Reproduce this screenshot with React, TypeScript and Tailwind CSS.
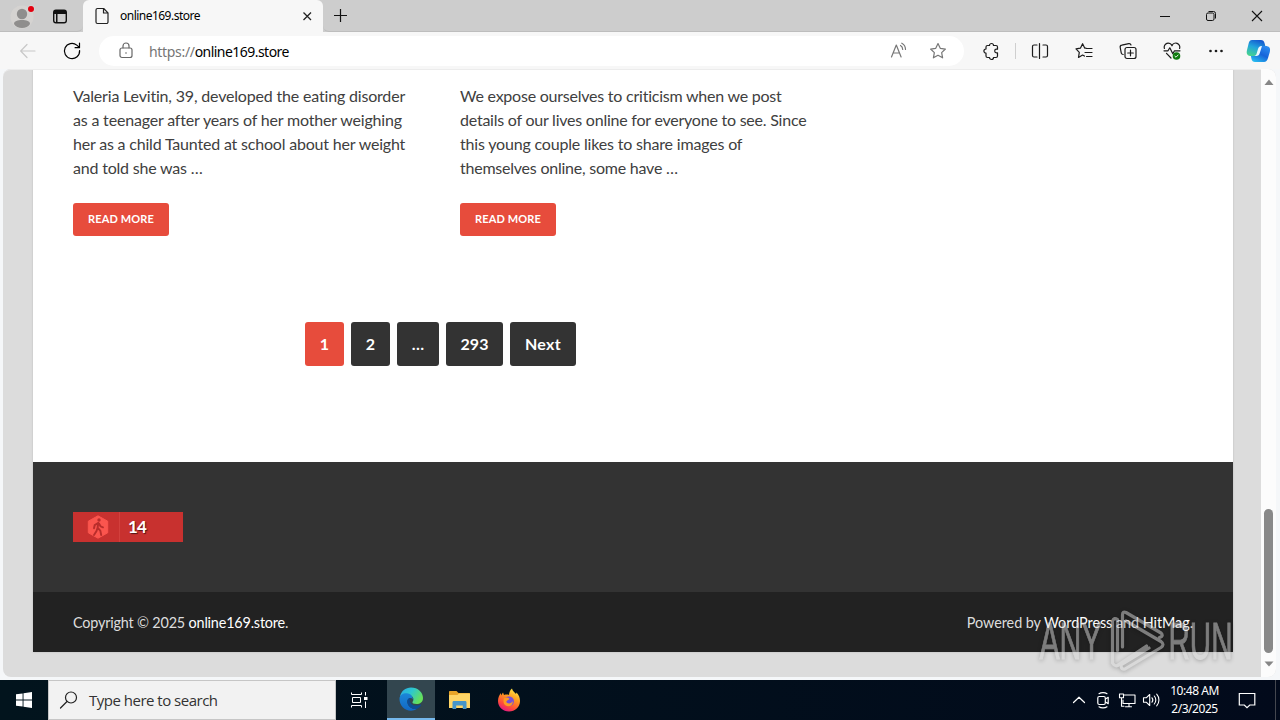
import React from 'react';

interface IconProps {
  size?: number;
  className?: string;
  children: React.ReactNode;
}

// Shared wrapper for the 20x20 line icons in the browser chrome and the tray
const Icon: React.FC<IconProps> = ({ size = 20, className = '', children }) => (
  <svg
    width={size}
    height={size}
    viewBox="0 0 20 20"
    fill="none"
    stroke="currentColor"
    strokeWidth="1.2"
    strokeLinecap="round"
    strokeLinejoin="round"
    className={`block shrink-0 ${className}`}
  >
    {children}
  </svg>
);

const STAR = 'M10 2.6l2.25 4.75 5.15.7-3.75 3.6.95 5.2L10 14.3l-4.6 2.55.95-5.2-3.75-3.6 5.15-.7z';

const TabStrip: React.FC = () => (
  <div className="flex h-8 shrink-0 bg-[#cdcdcd]">
    <div className="flex w-[83px] items-center rounded-br-md border-b border-[#bdbdbd]">
      <svg width="44" height="30" viewBox="0 0 44 30" className="block shrink-0">
        <circle cx="22" cy="16" r="11.5" fill="#d5d3d1" />
        <circle cx="22" cy="13" r="5.2" fill="#8f8e8d" />
        <path d="M14 23c0-3 3.500-4 8-4s8 1 8 4c-1.500 2.500-4.500 4-8 4s-6.500-1.500-8-4z" fill="#8f8e8d" />
        <circle cx="31" cy="8" r="4" fill="#d5d3d1" />
        <circle cx="31" cy="8" r="3" fill="#e3000f" />
      </svg>
      <svg width="32" height="30" viewBox="0 0 32 30" className="block shrink-0">
        <rect x="9.700" y="9.200" width="12.600" height="12.600" rx="2.200" fill="none" stroke="#111" strokeWidth="1.400" />
        <path d="M10 9.500h12V13h-8.500v8.500H12V13h-2z" fill="#111" />
      </svg>
    </div>
    <div className="flex w-[240px] items-center rounded-t-md bg-[#f7f7f7]">
      <svg width="37" height="32" viewBox="0 0 37 32" className="block shrink-0">
        <path
          d="M14.500 8.500h6.200l4.300 4.300v9.200a1.500 1.500 0 0 1-1.500 1.500h-9a1.500 1.500 0 0 1-1.500-1.500V10a1.500 1.500 0 0 1 1.500-1.500zM20.500 8.700V13h4.300"
          fill="none"
          stroke="#222"
          strokeWidth="1.200"
          strokeLinejoin="round"
        />
      </svg>
      <span className="grow font-['Noto_Sans'] text-[12px] tracking-[-0.52px] text-black">online169.store</span>
      <svg width="32" height="32" viewBox="0 0 32 32" className="block shrink-0">
        <path d="M12.500 12.500l7.500 7.500M20 12.500L12.500 20" stroke="#222" strokeWidth="1.300" />
      </svg>
    </div>
    <div className="flex grow items-center justify-between rounded-bl-md border-b border-[#bdbdbd]">
      <svg width="34" height="31" viewBox="0 0 34 31" className="block">
        <path d="M17.500 9v13M11 15.500h13" stroke="#111" strokeWidth="1.200" />
      </svg>
      <div className="flex text-[#111]">
        <svg width="46" height="31" viewBox="0 0 46 31" className="block">
          <path d="M18 16.500h10" stroke="currentColor" />
        </svg>
        <svg width="46" height="31" viewBox="0 0 46 31" className="block" fill="none" stroke="currentColor">
          <rect x="18.500" y="13" width="7.500" height="7.500" rx="1.500" />
          <path d="M20.500 11.500h5a2 2 0 0 1 2 2v5" />
        </svg>
        <svg width="46" height="31" viewBox="0 0 46 31" className="block">
          <path d="M18 11l10 10M28 11L18 21" stroke="currentColor" strokeWidth="1.100" />
        </svg>
      </div>
    </div>
  </div>
);

const ToolButton: React.FC<{ children: React.ReactNode; className?: string }> = ({ children, className = '' }) => (
  <div className={`flex w-11 shrink-0 items-center justify-center ${className}`}>{children}</div>
);

const Toolbar: React.FC = () => (
  <div className="flex h-[37px] shrink-0 items-center bg-[#f7f7f7] pl-1.5 pt-px text-[#1b1b1b]">
    <ToolButton className="text-[#c8c8c8]">
      <Icon>
        <path d="M17 10H3M9 3.500L2.700 10 9 16.500" />
      </Icon>
    </ToolButton>
    <ToolButton>
      <Icon className="text-black">
        <path d="M17.600 9.500A7.600 7.600 0 1 1 14.800 4.100L17.300 6.400M17.500 2.200v4.500h-4.400" />
      </Icon>
    </ToolButton>
    <div className="ml-[5px] flex h-[30px] w-[865px] shrink-0 items-center rounded-full bg-white">
      <div className="flex w-[50px] items-center justify-center pl-1 text-[#686868]">
        <Icon>
          <rect x="4" y="7" width="12" height="9.500" rx="2" />
          <path d="M7 6.800V5a3 3 0 0 1 6 0v1.800" />
          <circle cx="10" cy="12" r=".8" fill="currentColor" stroke="none" />
        </Icon>
      </div>
      <span className="grow font-['Noto_Sans'] text-[14px] tracking-[-0.54px] text-black">
        <span className="tracking-[-0.32px] text-[#767676]">https://</span>online169.store
      </span>
      <div className="flex w-10 justify-center pl-0.5 text-[#777]">
        <Icon>
          <path d="M2.500 16L7.300 4l4.800 12M4.200 12h6.200M11.500 4.500c1.400.8 2.200 2.200 2.200 4M12.800 2.200c2.300 1.200 3.700 3.300 3.700 6.300" />
        </Icon>
      </div>
      <div className="mr-1.5 flex w-10 justify-center text-[#777]">
        <Icon>
          <path d={STAR} />
        </Icon>
      </div>
    </div>
    <ToolButton className="ml-[5px]">
      <Icon>
        <path d="M6.500 4.500h2a2 2 0 0 1 4 0H15a1.500 1.500 0 0 1 1.500 1.500v2.200h-1a1.800 1.800 0 0 0 0 3.600h1V15a1.500 1.500 0 0 1-1.500 1.500h-2.500a2 2 0 0 1-4 0h-2A1.500 1.500 0 0 1 5 15v-2.800a2.100 2.100 0 0 1 0-4.200V6a1.500 1.500 0 0 1 1.500-1.500z" />
      </Icon>
    </ToolButton>
    <div className="mx-0.5 h-4 w-px bg-[#cfcfcf]" />
    <ToolButton>
      <Icon>
        <path d="M7 4H4a1.500 1.500 0 0 0-1.500 1.500v9A1.500 1.500 0 0 0 4 16h3M13 4h3a1.500 1.500 0 0 1 1.500 1.500v9A1.500 1.500 0 0 1 16 16h-3M9.500 2.500v15" />
      </Icon>
    </ToolButton>
    <ToolButton>
      <Icon>
        <path d="M12 7.200h-1.200L8.600 2.700 6.400 7.200l-4.400.7 3.300 3.500-.8 5 4.100-2.300 1.800 1M12.500 7.500h5.500M11 11.500h7M12.500 15.500h5.500" />
      </Icon>
    </ToolButton>
    <ToolButton>
      <Icon>
        <rect x="7" y="6.500" width="11" height="11" rx="2" />
        <path d="M12.500 9.200v5.600M9.700 12h5.600M5.200 13.500a2 2 0 0 1-1.900-1.400L2.200 6.500a2 2 0 0 1 1.600-2.300l7-1.600A2 2 0 0 1 13 4" />
      </Icon>
    </ToolButton>
    <ToolButton>
      <Icon>
        <path d="M2.400 7.500a4 4 0 0 1 7.600-2.700 4 4 0 0 1 7.600 2.700M2 9.800h4l1.800-3 3 6 1.700-3H18M4.500 12.300L9 17" />
        <circle cx="14.500" cy="15" r="3.800" fill="#107c10" stroke="none" />
        <path d="M12.900 15.200l1.100 1 2.100-2.200" stroke="#fff" strokeWidth=".9" />
      </Icon>
    </ToolButton>
    <ToolButton>
      <Icon>
        <g fill="currentColor" stroke="none">
          <circle cx="4.500" cy="10" r="1.350" />
          <circle cx="10" cy="10" r="1.350" />
          <circle cx="15.500" cy="10" r="1.350" />
        </g>
      </Icon>
    </ToolButton>
    <svg width="40" height="28" viewBox="0 0 40 28" className="block shrink-0">
      <defs>
        <linearGradient id="copilotLeft" x1=".6" y1="0" x2=".2" y2="1">
          <stop offset="0" stopColor="#155bd0" />
          <stop offset=".45" stopColor="#22a5dc" />
          <stop offset="1" stopColor="#48d58c" />
        </linearGradient>
        <linearGradient id="copilotRight" x1=".8" y1="0" x2=".2" y2="1">
          <stop offset="0" stopColor="#2b8df2" />
          <stop offset=".5" stopColor="#1664d9" />
          <stop offset="1" stopColor="#29bdf0" />
        </linearGradient>
      </defs>
      <path d="M14 3h9c2 0 3 1 3.500 3l.8 3h-3c-2 0-3 1-3.500 3l-1.300 5c-.5 1.500-1.500 2-3 2h-3c-4 0-5.500-2-4.500-6l1.500-6c.6-2.500 1.500-4 3.500-4z" fill="url(#copilotLeft)" />
      <path d="M26 25h-9c-2 0-3-1-3.500-3l-.6-3h3.600c1.500 0 2.500-.7 3-2l1.300-5c.5-2 1.500-3 3.500-3h3c4 0 5.500 2 4.500 6l-1.800 6c-.8 2.500-2 4-4 4z" fill="url(#copilotRight)" />
      <path d="M18.500 17l1.500-5c.5-2 1.800-3 4-3l-2.200 7c-.5 2-1.500 3-3.800 3h-3c2 0 3-.5 3.500-2z" fill="#eef8ff" />
    </svg>
  </div>
);

// Tracking is set per line so that the line ends stay put
const posts = [
  [
    { text: 'Valeria Levitin, 39, developed the eating disorder', className: 'tracking-[-0.18px]' },
    { text: 'as a teenager after years of her mother weighing', className: 'tracking-[-0.18px]' },
    { text: 'her as a child Taunted at school about her weight', className: 'tracking-[-0.19px]' },
    { text: 'and told she was …', className: 'tracking-[-0.2px]' },
  ],
  [
    { text: 'We expose ourselves to criticism when we post', className: 'tracking-[-0.23px]' },
    { text: 'details of our lives online for everyone to see. Since', className: 'tracking-[-0.23px]' },
    { text: 'this young couple likes to share images of', className: 'tracking-[-0.18px]' },
    { text: 'themselves online, some have …', className: 'tracking-[-0.23px]' },
  ],
];

const pages = [
  { label: '1', className: 'w-[39px] bg-[#e74c3c]' },
  { label: '2', className: 'w-[39px] bg-[#333]' },
  { label: '…', className: 'w-[42px] bg-[#333]' },
  { label: '293', className: 'w-[57px] bg-[#333]' },
  { label: 'Next', className: 'w-[66px] bg-[#333] tracking-[0.3px]' },
];

const SitePage: React.FC = () => (
  <div className="mx-auto flex h-[583px] w-[1200px] flex-col bg-white font-['Lato',sans-serif] shadow-[0_0_2px_rgba(0,0,0,0.15)]">
    <div className="flex h-[393px] shrink-0 flex-col px-10 pt-[15px]">
      <div className="flex h-[238px] shrink-0 gap-[40px]">
        {posts.map((lines) => (
          <div key={lines[0].text} className="w-[347px]">
            <p className="whitespace-nowrap text-[16px] leading-6 text-[#404040]">
              {lines.map((line) => (
                <span key={line.text} className={`block ${line.className}`}>
                  {line.text}
                </span>
              ))}
            </p>
            <a className="mt-[23px] flex h-[33px] w-24 items-center justify-center rounded-[3px] bg-[#e74c3c] text-[11px] font-bold tracking-[0.12px] text-white">
              READ MORE
            </a>
          </div>
        ))}
      </div>
      <div className="flex w-[735px] justify-center gap-[7px]">
        {pages.map((page) => (
          <a
            key={page.label}
            className={`flex h-11 items-center justify-center rounded-[3px] text-[16px] font-bold text-white ${page.className}`}
          >
            {page.label}
          </a>
        ))}
      </div>
    </div>
    <div className="h-[130px] shrink-0 bg-[#333] px-10 pt-[50px]">
      <div className="flex h-[30px] w-[110px] items-center bg-[#c8312f]">
        <div className="flex h-full w-[47px] items-center justify-center border-r border-[#d2403d] pl-1">
          <svg width="22" height="24" viewBox="0 0 22 24" className="block">
            <path d="M11 .8l9.700 5.400v11.600L11 23.200 1.300 17.800V6.200z" fill="#fb554e" stroke="#fb554e" strokeLinejoin="round" />
            <circle cx="12" cy="5" r="1.700" fill="#b92d2b" />
            <path
              d="M11.300 8l-.8 5.300M11 8l-3.300 2.200-.7 3M12 8.500l1.500 2.800 2.500 1M10.500 13l-1 3-2.500 4M10.800 13l2.500 2.700.9 4.300"
              fill="none"
              stroke="#b92d2b"
              strokeWidth="1.900"
              strokeLinecap="round"
            />
          </svg>
        </div>
        <span className="pl-2 text-[17px] font-bold tracking-[-0.9px] text-white [text-shadow:1px_1px_1px_rgba(0,0,0,0.6)]">14</span>
      </div>
    </div>
    <div className="flex h-[60px] shrink-0 items-center justify-between bg-[#222] px-10 pt-px text-[14.4px] text-[#ddd]">
      <span className="tracking-[-0.18px]">
        Copyright © 2025 <span className="text-white">online169.store</span>.
      </span>
      <span className="tracking-[-0.05px]">
        Powered by <span className="text-white">WordPress</span> and <span className="text-white">HitMag</span>.
      </span>
    </div>
  </div>
);

const ScrollBar: React.FC = () => (
  <div className="flex w-[15px] shrink-0 flex-col items-center rounded-r-lg bg-[#fcfcfc]">
    <svg width="10" height="6" viewBox="0 0 10 6" className="mt-2.5 block shrink-0">
      <path d="M5 .5L9.500 6h-9z" fill="#868686" />
    </svg>
    <div className="mt-[424px] h-[144px] w-[9px] shrink-0 rounded-full bg-[#898989]" />
    <svg width="10" height="6" viewBox="0 0 10 6" className="mt-2 block shrink-0">
      <path d="M5 5.500L.5.500h9z" fill="#868686" />
    </svg>
  </div>
);

const Watermark: React.FC = () => (
  <svg
    width="212"
    height="72"
    viewBox="0 0 212 72"
    className="absolute left-[1036px] top-[606px] opacity-50 drop-shadow-[0_1px_2px_rgba(0,0,0,0.5)]"
  >
    <g
      fill="#d8d8d8"
      stroke="#d8d8d8"
      strokeWidth=".9"
      fontFamily="'Liberation Sans Narrow', 'Liberation Sans', sans-serif"
      fontSize="52"
    >
      <text x="3.500" y="53" textLength="62" lengthAdjust="spacingAndGlyphs">ANY</text>
      <text x="132.500" y="53" textLength="64" lengthAdjust="spacingAndGlyphs">RUN</text>
    </g>
    <path
      d="M86.500 41V9q0-4 3.500-2.500l35 20.500q3 3-1.500 4.500M90 15l35 20.500q4 3 0 6L89 63q-4 1-4-4l28-17M76.500 57V15q1.500-4 5-1.500v31M76.500 57q3 5 7 1l27-18"
      fill="none"
      stroke="#d8d8d8"
      strokeWidth="3.200"
      strokeLinecap="round"
      strokeLinejoin="round"
    />
  </svg>
);

const TaskBar: React.FC = () => (
  <div className="flex h-10 shrink-0 items-stretch bg-linear-to-r from-[#02141d] to-[#020a1b] text-white">
    <div className="flex w-12 items-center justify-center">
      <svg width="16" height="16" viewBox="0 0 16 16" fill="#fff" className="block">
        <path d="M0 2.300l6.600-.9v6.100H0zM7.500 1.200L16 0v7.500H7.500zM0 8.400h6.600v6.200L0 13.700zM7.500 8.400H16V16l-8.500-1.200z" />
      </svg>
    </div>
    <div className="flex w-72 items-center border border-[#c6c6c6] bg-[#f2f2f2] pl-2.5 text-[#222]">
      <Icon>
        <circle cx="12" cy="7.500" r="5.500" />
        <path d="M8 11.500L1.500 18" />
      </Icon>
      <span className="pl-2.5 font-['Open_Sans'] text-[15px] tracking-[-0.5px] text-[#333]">Type here to search</span>
    </div>
    <div className="flex w-[51px] items-center pl-3.5">
      <svg width="20" height="20" viewBox="0 0 20 20" fill="none" stroke="#fff" className="block">
        <path d="M1.500 2.500v2h10v-2M1.500 17.500v-2h10v2M2.500 7.500h8v5h-8zM15.500 2v3.500M15.500 11.500V18" />
        <path d="M14 7h3.500v3H14z" fill="#fff" stroke="none" />
      </svg>
    </div>
    <div className="flex w-12 items-center justify-center border-b-2 border-[#76b9ed] bg-[#33464f]">
      <svg width="26" height="26" viewBox="0 0 26 26" className="block">
        <defs>
          <linearGradient id="edgeTop" x1="0" y1="0" x2="1" y2=".5">
            <stop offset="0" stopColor="#2aa8e6" />
            <stop offset=".5" stopColor="#2dc7cf" />
            <stop offset="1" stopColor="#66e05a" />
          </linearGradient>
          <linearGradient id="edgeBody" x1="0" y1="0" x2="0" y2="1">
            <stop offset="0" stopColor="#1b87d8" />
            <stop offset="1" stopColor="#1268c4" />
          </linearGradient>
        </defs>
        <path d="M2 11C3 5 7.500 1.500 13 1.500c7 0 12 5 12 10.500 0 4-3 6-6.500 6-3 0-4.500-1-4-2 1.500-2 1.300-4.500-1-6C9 7.500 4 8 2 11z" fill="url(#edgeTop)" />
        <path d="M1.500 13C1.500 8.500 6 6.800 10 7.500c3 .6 5 3 4.800 6-.3-.8-1.200-1.500-2.300-1.500-2.500 0-3.500 2.500-3 5 .8 4 5 6.500 9 6-1.500 1-3.500 1.700-5.500 1.700C6.500 24.700 1.500 19.500 1.500 13z" fill="url(#edgeBody)" />
        <path d="M9.300 15c-.3 5 4.500 8.500 9.400 8 1.700-.8 3.300-2 4.300-3.700.3-.6-.1-.9-.7-.6-5 2-9.300.5-10.300-3-.5-1.800.2-3.200 1-3.700-2-.3-3.500 1-3.700 3z" fill="#0c4c96" />
      </svg>
    </div>
    <div className="ml-px flex w-12 items-center justify-center">
      <svg width="22" height="20" viewBox="0 0 22 20" className="block">
        <path d="M0 2c0-.7.400-1 1-1h6.500l2 2H20c.7 0 1 .3 1 1v14H0z" fill="#e9a528" />
        <path d="M0 5h8.500l1.500-1.500h11V18H0z" fill="#ffd566" />
        <path d="M3.500 19v-6.500c0-1 .5-1.500 1.500-1.500h11c1 0 1.500.5 1.500 1.500V19h-3.700v-3.500H7.200V19z" fill="#4695c9" />
      </svg>
    </div>
    <div className="ml-px flex w-12 items-center justify-center">
      <svg width="24" height="24" viewBox="0 0 24 24" className="block">
        <defs>
          <linearGradient id="foxFire" x1=".8" y1="0" x2=".3" y2="1">
            <stop offset="0" stopColor="#fff04a" />
            <stop offset=".4" stopColor="#ff9a1f" />
            <stop offset=".75" stopColor="#ff4b3a" />
            <stop offset="1" stopColor="#e31587" />
          </linearGradient>
        </defs>
        <path d="M15 .5c.5 2.500 2.500 3.500 4 5.500l.5-1.500c2.500 2.500 3.500 5.500 3.500 8.500 0 6-5 10.500-11 10.500S1 19 1 13c0-3 1-6 3-8v2.500L6 4.500 7 7c2-.7 4-.5 5 0 0-2.500 1-5 3-6.500z" fill="url(#foxFire)" />
        <circle cx="12" cy="13.300" r="4.900" fill="#7650d8" />
        <path d="M7 10.500c2-1.500 4-1 5.500.3-1 1.700-3 1.500-3.200 3 .7 2 4.700 2.500 6.700-.8-.3 4-2.500 5.500-5 5.200-3.500-.3-5.500-3.700-4-7.700z" fill="#ff9b22" />
      </svg>
    </div>
    <div className="ml-auto flex items-center">
      <div className="flex gap-1">
        <Icon>
          <path d="M4.500 12.500L10 7.200l5.500 5.300" />
        </Icon>
        <Icon>
          <rect x="4.800" y="6.500" width="7.500" height="8" rx="1.500" />
          <path d="M12.500 9l2.700-1.700v6.400L12.500 12M6 3.700c2-1.500 6-1.500 8 0M6 16.800c2 1.500 6 1.500 8 0" />
        </Icon>
        <Icon>
          <path d="M7 5h11v8.500H6V10M12 13.500v3M8.500 16.700h6M2.500 4h4v3.700h-4zM4.500 7.700v8.500H7" strokeWidth="1.100" />
        </Icon>
        <Icon>
          <path d="M2.500 7.800h2.700L8.700 4.500v11L5.200 12.200H2.500zM11 7.800c1 1.300 1 3.100 0 4.400M13.300 6c2 2.200 2 5.800 0 8M15.700 4.200c3 3.400 3 8.200 0 11.600" strokeWidth="1.100" />
        </Icon>
      </div>
      <div className="flex w-[68px] flex-col items-center pr-px font-['Noto_Sans'] text-[12px] leading-[18px] tracking-[-0.45px]">
        <span className="whitespace-nowrap">10:48 AM</span>
        <span className="whitespace-nowrap">2/3/2025</span>
      </div>
      <div className="flex w-9 items-center justify-center">
        <Icon>
          <path d="M2.300 3.500h15.500v11.500h-5L10 17.700 7.300 15h-5z" strokeLinejoin="miter" />
        </Icon>
      </div>
      <div className="ml-[10px] h-10 w-px bg-[#44474f]" />
      <div className="w-1" />
    </div>
  </div>
);

const App: React.FC = () => {
  return (
    <div className="relative flex h-[720px] w-[1280px] flex-col overflow-hidden bg-[#f7f7f7]">
      <TabStrip />
      <Toolbar />
      <div className="flex h-[611px] shrink-0 bg-[#f5f7f9] pb-[3px] pl-[3px] pr-1">
        <div className="flex grow rounded-lg bg-[#dcdcdc]">
          <div className="w-[1258px] shrink-0 overflow-hidden rounded-l-lg border-t border-[#ececec]">
            <div className="-mt-px pl-[2px]">
              <SitePage />
            </div>
          </div>
          <ScrollBar />
        </div>
      </div>
      <TaskBar />
      <Watermark />
    </div>
  );
};

export default App;
